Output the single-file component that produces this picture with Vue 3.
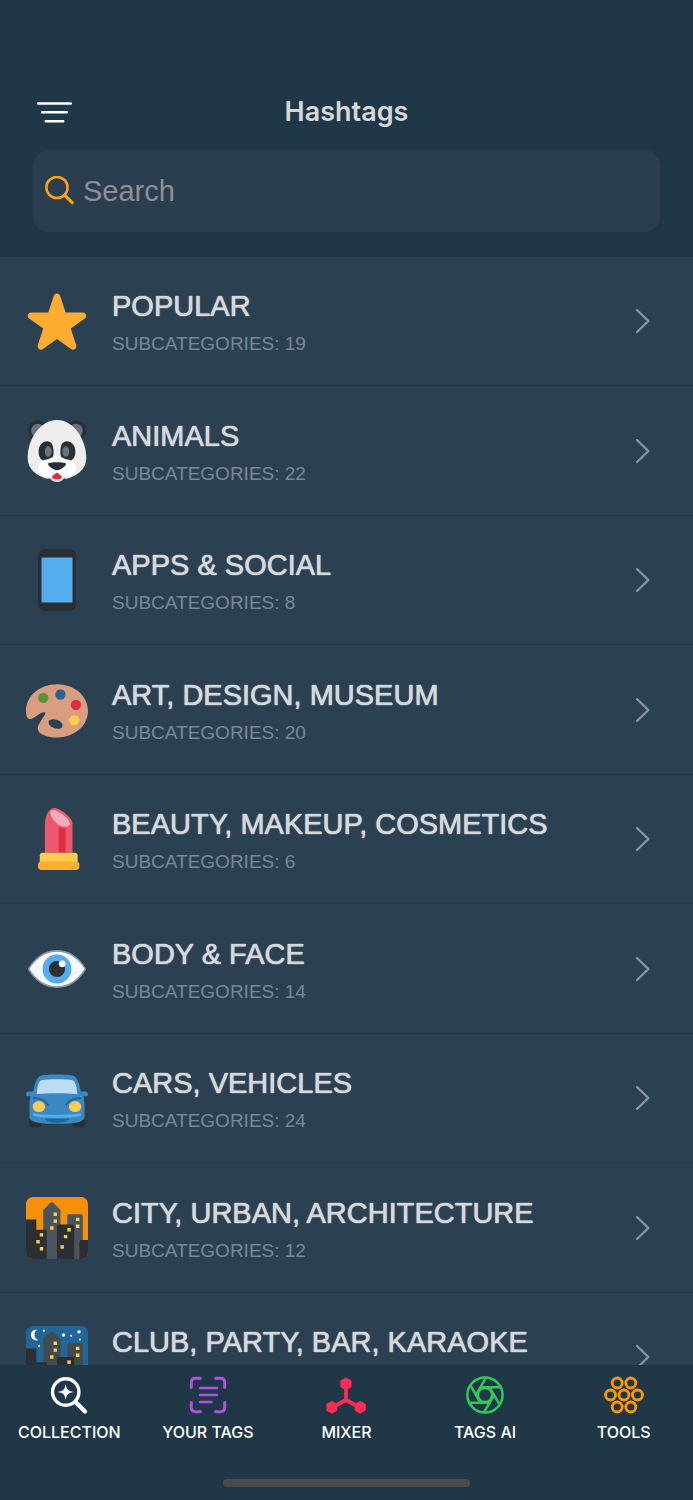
<template>
  <div class="app">
    <header class="header">
      <div class="title-bar">
        <button class="menu-btn" type="button" aria-label="Menu">
          <svg width="36" height="24" viewBox="0 0 36 24" fill="none" stroke="#fff" stroke-width="2.6" stroke-linecap="round">
            <path d="M1.3 3.5h32.400M5.200 12.3h24.600M8.800 21.2h17.400" />
          </svg>
        </button>
        <h1>Hashtags</h1>
      </div>
      <label class="search">
        <svg width="30" height="30" viewBox="0 0 30 30" fill="none" stroke="#ff9f1c" stroke-linecap="round">
          <circle cx="12" cy="11.500" r="10.600" stroke-width="2.500" />
          <path d="M19.600 19.100l7.600 7.600" stroke-width="3.200" />
        </svg>
        <input v-model="query" type="text" placeholder="Search" aria-label="Search" />
      </label>
    </header>

    <main class="content">
      <ul class="list">
        <li v-for="item in filtered" :key="item.name">
          <a href="#" class="row" @click.prevent>
            <svg class="emoji" viewBox="0 0 36 36" aria-hidden="true">
              <path
                v-if="item.icon === 'star'"
                fill="#ffac33"
                d="M27.287 34.627c-.404 0-.806-.124-1.152-.371L18 28.422l-8.135 5.834c-.343.247-.747.371-1.149.371-.408 0-.818-.128-1.162-.383-.69-.504-.98-1.397-.714-2.211l3.178-9.745-8.194-5.671c-.693-.495-.987-1.391-.723-2.201.268-.805 1.016-1.351 1.864-1.359L12.947 13l3.179-9.549c.268-.809 1.023-1.353 1.874-1.353.851 0 1.606.545 1.875 1.353L23 13l10.036.057c.852.008 1.602.557 1.864 1.359.264.812-.031 1.708-.723 2.2l-8.194 5.671 3.178 9.745c.266.814-.023 1.707-.713 2.211-.344.255-.751.384-1.161.384z"
              />
              <g v-else-if="item.icon === 'panda'">
                <circle cx="6.8" cy="6" r="5.8" fill="#292f33" />
                <circle cx="29.2" cy="6" r="5.8" fill="#292f33" />
                <circle cx="7" cy="6.2" r="4" fill="#66757f" />
                <circle cx="29" cy="6.2" r="4" fill="#66757f" />
                <path fill="#ccd6dd" d="M13 31c0 3 2.5 5 5 5s5-2 5-5z" />
                <path fill="#eee" d="M35 22c0 7-6 10.500-11 12-2 .5-4-1-6-1s-4 1.500-6 1C7 32.500 1 29 1 22 1 11 8.500 0 18 0s17 11 17 22z" />
                <path fill="#292f33" d="M16 17.500c.3 4-1.300 6.500-4.100 6.500s-4.600-2.400-4.600-5.600c0-3.600 2.200-6.100 5-6.100 2.500 0 3.500 2.200 3.700 5.200zM20 17.500c-.3 4 1.300 6.500 4.100 6.500s4.600-2.400 4.600-5.600c0-3.600-2.200-6.100-5-6.100-2.500 0-3.500 2.200-3.700 5.200z" />
                <path fill="#fff" d="M18 21c2.800 0 4 1.600 6 2 2.700.4 5 2 5 4.800 0 5-6.500 6.400-11 4.200-4.500 2.200-11 .8-11-4.200 0-2.800 2.300-4.400 5-4.800 2-.4 3.200-2 6-2z" />
                <ellipse cx="12.900" cy="18.300" rx="2" ry="3" fill="#66757f" />
                <ellipse cx="23.100" cy="18.300" rx="2" ry="3" fill="#66757f" />
                <path fill="#292f33" d="M12.800 25.500c0-1.200 10.400-1.200 10.400 0s-3 3.600-5.200 3.600-5.200-2.400-5.200-3.600z" />
                <path fill="#dd2e44" d="M18 30.500c1.200 1 2.800 1.500 2.800 2.600 0 1-1.300 1.300-2.800 1.300s-2.800-.3-2.800-1.300c0-1.100 1.600-1.600 2.800-2.600z" />
              </g>
              <g v-else-if="item.icon === 'phone'">
                <path fill="#292f33" d="M11 36s-4 0-4-4V4s0-4 4-4h14s4 0 4 4v28s0 4-4 4H11z" />
                <path fill="#55acee" d="M9 5h18v26H9z" />
              </g>
              <g v-else-if="item.icon === 'palette'">
                <path
                  fill="#d99e82"
                  fill-rule="evenodd"
                  d="M18 3C8 3 0 9.700 0 18.500c0 2.800.7 4.800 2.300 4.800 2.500 0 5.200-4.200 9-4 .8.900-4.500 6.500-4.500 9.400 0 3.500 6 5.300 11.200 5.300 10 0 18-6.600 18-15.500S28 3 18 3zM13.200 24.600c.5-1.500 3-1.600 5.100-.8s3.400 2.500 2.700 3.900-2.900 1.400-4.900.7-3.400-2.300-2.900-3.800z"
                />
                <circle cx="10" cy="11" r="3" fill="#5c913b" />
                <circle cx="20" cy="9" r="3" fill="#226699" />
                <circle cx="29" cy="15" r="3" fill="#dd2e44" />
                <circle cx="28" cy="24" r="3" fill="#ffcc4d" />
              </g>
              <g v-else-if="item.icon === 'lipstick'">
                <path fill="#ea596e" d="M11 26V9.500C11 4 13.500 0 16.500 0 19.500 0 27 5.500 27 9v17z" />
                <path fill="#dd2e44" d="M19 11l4 1v14h-4z" />
                <path fill="#f4abba" d="M14.300 1.600c1.700-2.200 11.400 4 11.300 7.600-.1 1.800-3.200 2.300-5.600 1.100-3.400-1.700-7-6.900-5.700-8.700z" />
                <path fill="#ffcc4d" d="M8 33v-5.500c0-.8.700-1.500 1.500-1.500h19c.8 0 1.500.7 1.500 1.500V33z" />
                <rect x="7" y="31" width="24" height="5" rx="2" fill="#ffac33" />
              </g>
              <g v-else-if="item.icon === 'eye'">
                <path fill="#8899a6" d="M1 18C5 11 11 7 18 7s13 4 17 11c-4 7-10 11-17 11S5 25 1 18z" />
                <path fill="#f5f8fa" d="M2 18c4-6.300 9.500-10 16-10s12 3.700 16 10c-4 6.300-9.500 10-16 10S6 24.300 2 18z" />
                <circle cx="18" cy="18" r="8.400" fill="#55acee" />
                <circle cx="18" cy="18" r="4.700" fill="#292f33" />
                <circle cx="21" cy="15" r="2" fill="#f5f8fa" />
              </g>
              <g v-else-if="item.icon === 'car'">
                <path fill="#292f33" d="M2 28h7v5.500C9 34.500 8 35 7 35H4c-1 0-2-.5-2-1.500zM27 28h7v5.500c0 1-1 1.500-2 1.500h-3c-1 0-2-.5-2-1.500z" />
                <path fill="#3b88c3" d="M34.500 14.200h-2.600C30.500 8 29.500 5.500 27 4.900c-3.500-.8-14.500-.8-18 0-2.500.6-3.500 3.100-4.900 9.300H1.500C.5 14.200 0 15 0 15.800S.5 17 1.500 17h1.200C2 18.800 2 22 2 24.500V29c0 3.500 8 4 16 4s16-.5 16-4v-4.500c0-2.500 0-5.700-.7-7.500h1.200c1 0 1.500-.4 1.500-1.200s-.5-1.600-1.500-1.600z" />
                <path fill="#bbddf5" d="M6.200 15.700C6.500 12 7.300 8.500 8.600 7.800c1.600-1 17.200-1 18.800 0 1.300.7 2.100 4.200 2.400 7.900-6.500-.6-17.100-.6-23.600 0z" />
                <path fill="none" stroke="#226699" stroke-width="1.300" stroke-linecap="round" d="M4.500 18c4 .3 7 1.500 8 3.800M31.500 18c-4 .3-7 1.500-8 3.800" />
                <ellipse cx="7.500" cy="23" rx="3.600" ry="3.200" fill="#ffcc4d" />
                <ellipse cx="28.500" cy="23" rx="3.600" ry="3.200" fill="#ffcc4d" />
                <path fill="none" stroke="#55acee" stroke-width="1.700" stroke-linecap="round" d="M4.800 27.700c4 1.400 22.400 1.400 26.400 0" />
                <path fill="#226699" d="M11 29.800c4 .4 10 .4 14 0 0 1.500-2 2.500-7 2.500s-7-1-7-2.500z" />
              </g>
              <g v-else>
                <rect width="36" height="36" rx="4" :fill="item.icon === 'city' ? '#f4900c' : '#226699'" />
                <g v-if="item.icon === 'night'" fill="#fff">
                  <path d="M6.500 2.200a3.100 3.100 0 1 0 .6 5.900A3.300 3.300 0 0 1 6.500 2.200z" />
                  <circle cx="10.400" cy="2.700" r=".6" />
                  <circle cx="21.800" cy="5.200" r="1" />
                  <circle cx="26.200" cy="5.700" r=".6" />
                  <circle cx="30.800" cy="3.400" r="1" />
                  <circle cx="31.300" cy="7.800" r=".6" />
                  <circle cx="7.500" cy="11.600" r=".6" />
                </g>
                <path :fill="item.icon === 'city' ? '#4b545d' : '#414a4d'" d="M10 36V7.500L14 3.500q1-.8 2 0L20 7.500V36zM24 36V11q0-1 1-1h7q1 0 1 1v25z" />
                <path v-if="item.icon === 'city'" fill="#292f33" d="M0 13h6v6h6v17H4q-4 0-4-4zM18 36V17q0-1 1-1h8q1 0 1 1v19zM31 36V26q0-1 1-1h4v7q0 4-4 4z" />
                <path v-else fill="#292f33" d="M0 13h6v8h6v15H4q-4 0-4-4zM18 36V18h10v18zM31 36V27h5v5q0 4-4 4z" />
                <path fill="#ffcc4d" d="M16 9h2v2h-2zM16 13h2v2h-2zM14 17h2v2h-2zM29 12h2v2h-2zM29 16h2v2h-2z" />
                <path v-if="item.icon === 'city'" fill="#ffcc4d" d="M24 18h2v2h-2zM22 22h2v2h-2zM20 28h2v2h-2zM8 21h2v2H8zM6 25h2v2H6zM8 29h2v2H8z" />
                <path v-else fill="#ffcc4d" d="M24 20h2v2h-2z" />
              </g>
            </svg>
            <span class="text">
              <span class="name">{{ item.name }}</span>
              <span v-if="item.count" class="sub">SUBCATEGORIES: {{ item.count }}</span>
            </span>
            <svg class="chevron" width="16" height="26" viewBox="0 0 16 26" fill="none" stroke="#8895a0" stroke-width="2.400" stroke-linecap="round" stroke-linejoin="round">
              <path d="M2 2l11.400 11L2 24" />
            </svg>
          </a>
        </li>
      </ul>
    </main>

    <nav class="tabs">
      <button v-for="tab in tabs" :key="tab.label" class="tab" type="button" @click="active = tab.label">
        <svg width="40" height="40" viewBox="0 0 40 40" fill="none" :stroke="tab.color" stroke-linecap="round" stroke-linejoin="round">
          <g v-if="tab.icon === 'collection'">
            <circle cx="16.700" cy="17" r="13.200" stroke-width="3.400" />
            <path d="M26.500 27l9.500 9.500" stroke-width="4.400" />
            <path :fill="tab.color" stroke="none" d="M16.700 9c.9 5.500 2.500 7.100 8 8-5.500.9-7.100 2.500-8 8-.9-5.500-2.500-7.100-8-8 5.500-.9 7.100-2.500 8-8z" />
          </g>
          <g v-else-if="tab.icon === 'scan'">
            <path stroke-width="3" d="M3.300 12.500V7.500q0-4.200 4.200-4.200h5M27.500 3.300h5q4.200 0 4.200 4.200v5M36.700 27.500v5q0 4.200-4.200 4.200h-5M12.500 36.700h-5q-4.200 0-4.200-4.200v-5" />
            <path stroke-width="2.400" d="M12 13h17M12 20h17M12 27h11.500" />
          </g>
          <g v-else-if="tab.icon === 'mixer'">
            <path stroke-width="3.800" d="M20 9v16M20 25L6 32.500M20 25l14 7.500" />
            <path :fill="tab.color" stroke-width="1.800" d="M20 3.500l4.600 2.600v5.400L20 14.100l-4.600-2.600V6.100zM5.800 27l4.600 2.600V35l-4.600 2.600L1.200 35v-5.400zM34.200 27l4.600 2.600V35l-4.600 2.600-4.600-2.600v-5.400z" />
          </g>
          <g v-else-if="tab.icon === 'aperture'" stroke-width="2.500">
            <circle cx="20" cy="20" r="17.600" />
            <circle cx="20" cy="20" r="7.100" />
            <path v-for="n in 6" :key="n" d="M15.500 12.200H35" :transform="`rotate(${n * 60} 20 20)`" />
          </g>
          <g v-else stroke-width="2.900">
            <circle v-for="([x, y], i) in dots" :key="i" :cx="x" :cy="y" r="5" />
          </g>
        </svg>
        <span>{{ tab.label }}</span>
      </button>
      <div class="home-bar"></div>
    </nav>
  </div>
</template>

<script setup>
import { ref, computed } from 'vue';

const query = ref('');
const active = ref('COLLECTION');

const categories = [
  { name: 'POPULAR', count: 19, icon: 'star' },
  { name: 'ANIMALS', count: 22, icon: 'panda' },
  { name: 'APPS & SOCIAL', count: 8, icon: 'phone' },
  { name: 'ART, DESIGN, MUSEUM', count: 20, icon: 'palette' },
  { name: 'BEAUTY, MAKEUP, COSMETICS', count: 6, icon: 'lipstick' },
  { name: 'BODY & FACE', count: 14, icon: 'eye' },
  { name: 'CARS, VEHICLES', count: 24, icon: 'car' },
  { name: 'CITY, URBAN, ARCHITECTURE', count: 12, icon: 'city' },
  { name: 'CLUB, PARTY, BAR, KARAOKE', icon: 'night' },
];

const tabs = [
  { label: 'COLLECTION', icon: 'collection', color: '#ffffff' },
  { label: 'YOUR TAGS', icon: 'scan', color: '#af52de' },
  { label: 'MIXER', icon: 'mixer', color: '#ff2d55' },
  { label: 'TAGS AI', icon: 'aperture', color: '#34c759' },
  { label: 'TOOLS', icon: 'tools', color: '#ff9500' },
];

// circle centres of the tools icon
const dots = [[13.200, 8], [26.800, 8], [6.500, 20], [20, 20], [33.500, 20], [13.200, 32], [26.800, 32]];

// filter categories by the search text
const filtered = computed(() => {
  const q = query.value.trim().toUpperCase();
  return categories.filter((c) => c.name.includes(q));
});
</script>

<style>
body {
  margin: 0;
  background: #203748;
}
</style>

<style scoped>
.app {
  display: flex;
  flex-direction: column;
  height: 100vh;
  background: #203748;
  color: #d5d9dc;
  font-family: "Liberation Sans", Arial, sans-serif;
}

button {
  padding: 0;
  border: none;
  background: none;
  cursor: pointer;
}

svg {
  display: block;
  flex-shrink: 0;
}

/* Header */
.header {
  padding: 80px 33px 24px;
  border-bottom: 1px solid #1e3443;
}

.title-bar {
  display: grid;
  grid-template-columns: 1fr auto 1fr;
  align-items: center;
  height: 64px;
  margin-bottom: 6px;
  padding: 0 4px;
}

.title-bar h1 {
  margin: 0;
  font-family: Inter, sans-serif;
  font-size: 27px;
  line-height: 32px;
  font-weight: 600;
}

.search {
  display: flex;
  align-items: center;
  gap: 8px;
  height: 82px;
  padding: 0 12px;
  border-radius: 16px;
  background: #2a3e4f;
}

.search input {
  flex: 1;
  min-width: 0;
  padding: 0;
  border: none;
  outline: none;
  background: none;
  color: #d5d9dc;
  font-family: inherit;
  font-size: 29px;
  line-height: 40px;
}

.search input::placeholder {
  color: #8e8e95;
  opacity: 1;
}

/* Category list */
.content {
  flex: 1;
  min-height: 0;
  overflow-y: auto;
  scrollbar-width: none;
  background: #2b4152;
}

.list {
  margin: 0;
  padding: 0;
  list-style: none;
}

.row {
  display: flex;
  align-items: center;
  box-sizing: border-box;
  height: 129px;
  padding: 0 42px 0 26px;
  border-bottom: 1px solid #243b4b;
  color: inherit;
  text-decoration: none;
}

li:nth-child(even) .row {
  height: 130px;
}

.emoji {
  width: 62px;
  height: 62px;
}

.text {
  flex: 1;
  min-width: 0;
  min-height: 76px;
  padding: 8px 0 0 24px;
  white-space: nowrap;
}

.name,
.sub {
  display: block;
  line-height: 38px;
}

/* the soft shadow thickens the strokes to a medium weight */
.name {
  font-size: 29px;
  text-shadow: 0 0 1px currentColor, 0 0 1px currentColor;
}

.sub {
  color: #798996;
  font-size: 19px;
}

/* Tab bar */
.tabs {
  display: grid;
  grid-template-columns: repeat(5, 1fr);
  align-content: start;
  height: 125px;
  padding-top: 10px;
}

.tab {
  display: flex;
  flex-direction: column;
  align-items: center;
  gap: 7px;
  color: #fff;
  font-family: Inter, sans-serif;
  font-size: 16px;
  line-height: 20px;
  font-weight: 500;
  white-space: nowrap;
}

.home-bar {
  grid-column: 1 / -1;
  justify-self: center;
  width: 247px;
  height: 8px;
  margin-top: 37px;
  border-radius: 4px;
  background: #4a4a4a;
}
</style>
